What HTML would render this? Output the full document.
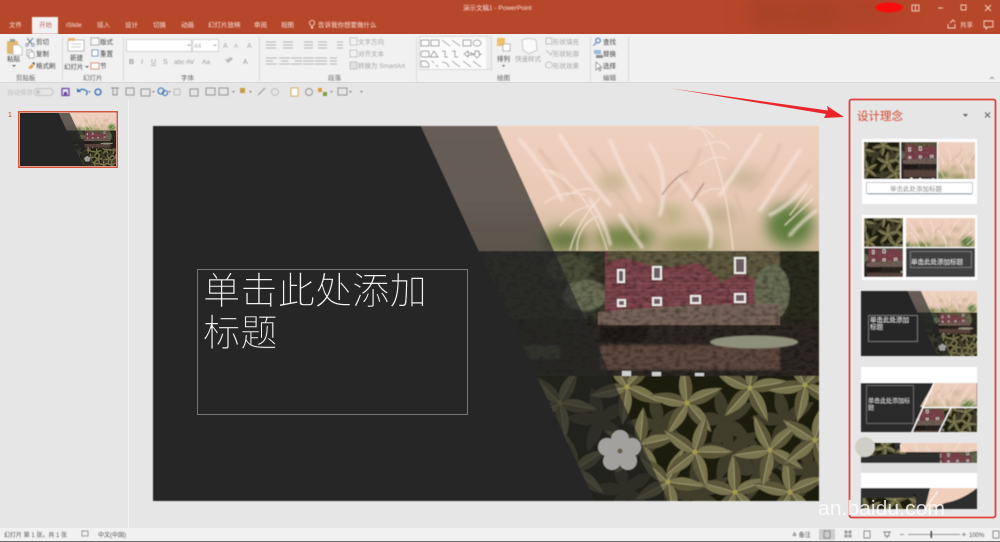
<!DOCTYPE html>
<html lang="zh-CN"><head><meta charset="utf-8"><title>演示文稿1 - PowerPoint</title>
<style>
html,body{margin:0;padding:0;width:1000px;height:542px;overflow:hidden;background:#e6e6e6}
svg{display:block}
text{font-family:"Liberation Sans","Noto Sans CJK SC",sans-serif}
.t{font-size:6.5px;fill:#444}
.g{font-size:6.5px;fill:#a5a5a5}
.w{font-size:6.5px;fill:#f6e3dc}
.k{font-size:6.5px;fill:#666}
</style></head><body>
<svg width="1000" height="542" viewBox="0 0 1000 542" xmlns="http://www.w3.org/2000/svg">
<defs>
<filter id="b3" x="-5%" y="-5%" width="110%" height="110%"><feGaussianBlur stdDeviation=".4"/></filter>
<filter id="b5" x="-5%" y="-5%" width="110%" height="110%"><feGaussianBlur stdDeviation=".6"/></filter>
<filter id="b1" x="-10%" y="-10%" width="120%" height="120%"><feGaussianBlur stdDeviation="1.4"/></filter>
<filter id="b6" x="-50%" y="-50%" width="200%" height="200%"><feGaussianBlur stdDeviation="7"/></filter>
<filter id="b9" x="-30%" y="-30%" width="160%" height="160%"><feGaussianBlur stdDeviation="12"/></filter>
<filter id="nk" x="0" y="0" width="100%" height="100%"><feTurbulence type="fractalNoise" baseFrequency=".16 .3" numOctaves="2" seed="4"/><feColorMatrix values="0 0 0 0 0 0 0 0 0 0 0 0 0 0 0 2.4 0 0 0 -1"/><feGaussianBlur stdDeviation=".5"/></filter>
<linearGradient id="pk" x1="0" y1="0" x2="0" y2="1"><stop offset="0" stop-color="#efd0bf"/><stop offset=".6" stop-color="#e8c9b5"/><stop offset="1" stop-color="#cdb799"/></linearGradient>
<clipPath id="c1"><rect x="421" y="126" width="398" height="125"/></clipPath>
<clipPath id="c2"><rect x="470" y="251" width="349" height="125"/></clipPath>
<clipPath id="c3"><rect x="530" y="376" width="289" height="125"/></clipPath>

<g id="pG">
 <g clip-path="url(#c1)">
 <rect x="421" y="126" width="398" height="125" fill="url(#pk)"/>
 <g filter="url(#b6)">
  <ellipse cx="790" cy="225" rx="24" ry="22" fill="#5f7d3c"/>
  <ellipse cx="625" cy="238" rx="30" ry="12" fill="#6f8242"/>
  <ellipse cx="565" cy="240" rx="22" ry="12" fill="#66773d"/>
  <ellipse cx="690" cy="245" rx="30" ry="7" fill="#8d9257"/>
  <ellipse cx="612" cy="182" rx="12" ry="7" fill="#b5aa7e"/>
  <ellipse cx="670" cy="215" rx="14" ry="9" fill="#b5ad80"/>
  <ellipse cx="745" cy="178" rx="18" ry="8" fill="#c7b296"/>
  <ellipse cx="720" cy="215" rx="16" ry="8" fill="#bcaa88"/>
 </g>
 <g fill="none" stroke="#d9b9a3" stroke-width="3.500" stroke-linecap="round" opacity=".55" filter="url(#b1)">
  <path d="M540 150q20 25 34 50M590 150q20 25 30 48M640 175q16 20 28 44M700 150q-8 25-30 45M780 145q-10 25-30 45M810 170q-14 18-30 30M620 195q14 18 18 40M735 195q10 20 12 40"/>
 </g>
 <g fill="none" stroke="#f8e6db" stroke-width="3.500" stroke-linecap="round" opacity=".75" filter="url(#b1)">
  <path d="M520 140q26 30 42 60M560 135q24 40 50 70M610 140q12 30 30 60M650 145q20 30 10 70M760 135q-20 30-40 60M800 150q-20 30-40 60M620 215q10 15 22 32M700 205q15 20 10 42M770 215q20-10 36-30M790 235q12-14 26-24M680 180q20 25 30 50M590 200q14 20 20 44"/>
 </g>
 <g fill="none" stroke="#f6e4d6" stroke-width="1.300" stroke-linecap="round" opacity=".9" filter="url(#b3)">
  <path d="M607 250Q590 190 550 172M570 250q8-30 30-52M567 195q20-10 28-4M543 170q14 0 24 10M545 203q18-14 40-8M560 226q15-20 34-20M577 250q0-24 20-34"/>
  <path d="M733 250Q725 170 703 130M690 128q16-2 24 10M705 145q18-8 24 4M700 165q16-12 26-6M700 195q10-8 20-6"/>
  <path d="M785 225q15-14 28-26M790 215q12-16 22-30"/>
 </g>
 <path d="M662 195q12-18 26-24M692 201q8-12 12-18" stroke="#8a6a68" stroke-width="1.200" fill="none" opacity=".7" filter="url(#b3)"/>
 </g>
</g>

<g id="pH">
 <g clip-path="url(#c2)">
 <rect x="470" y="251" width="349" height="125" fill="#2a2820"/>
 <rect x="470" y="251" width="135" height="68" fill="#34362a"/>
 <rect x="775" y="251" width="44" height="68" fill="#2c2d20"/>
 <ellipse cx="585" cy="295" rx="22" ry="16" fill="#6a6e54" filter="url(#b1)"/>
 <ellipse cx="570" cy="268" rx="24" ry="14" fill="#4a4e38" filter="url(#b1)"/>
 <rect x="605" y="252" width="174" height="60" fill="#7d444b"/>
 <g stroke="#9c6a72" stroke-width=".8" opacity=".55"><path d="M606 283H770M606 290H770M606 297H770M606 304H770M606 276H770"/></g>
 <path d="M608 251H780V268L760 283 742 272 722 282 700 263 660 268 625 258 608 262Z" fill="#5d6140" opacity=".85" filter="url(#b3)"/>
 <ellipse cx="772" cy="292" rx="18" ry="28" fill="#6a6e55" filter="url(#b3)"/>
 <path d="M598 312q80-8 182-8v22H598Z" fill="#77645a"/>
 <rect x="510" y="325" width="309" height="51" fill="#2e2722"/>
 <path d="M600 327H648L644 342H600Z" fill="#231c18" filter="url(#b3)"/>
 <path d="M600 345H780V370H600Z" fill="#5e493f" filter="url(#b1)"/>
 <path d="M520 345h40v14h-40z" fill="#4c4f38" filter="url(#b1)"/>
 <rect x="470" y="251" width="349" height="125" filter="url(#nk)" opacity=".38"/>
 <g fill="#e8e8e4">
  <rect x="617" y="269" width="8" height="14"/><rect x="652" y="266" width="10" height="14"/><rect x="734" y="257" width="12" height="17"/>
  <rect x="617" y="299" width="9" height="8"/><rect x="652" y="297" width="10" height="9"/><rect x="690" y="295" width="11" height="9"/><rect x="734" y="293" width="12" height="10"/>
 </g>
 <g fill="#6b5c60">
  <rect x="619" y="271" width="4" height="10"/><rect x="654" y="268" width="6" height="10"/><rect x="736" y="259" width="8" height="13"/>
  <rect x="619" y="301" width="5" height="4"/><rect x="654" y="299" width="6" height="5"/><rect x="692" y="297" width="7" height="5"/><rect x="736" y="295" width="8" height="6"/>
 </g>
 <ellipse cx="754" cy="342" rx="44" ry="6.500" fill="#8f907b" filter="url(#b3)"/>
 <rect x="622" y="371" width="9" height="5" fill="#cfcfcf"/><rect x="652" y="372" width="9" height="4" fill="#cfcfcf"/>
 <rect x="695" y="373" width="9" height="3" fill="#cfcfcf"/>
 </g>
</g>

<g id="lf"><path d="M0 0Q12-13 38 0Q12 13 0 0Z" fill="#79744f"/><path d="M0 0Q18 2 38 0Q12 13 0 0Z" fill="#5c5739"/><path d="M2 0H34" stroke="#a09a75" stroke-width=".7" fill="none"/></g>
<g id="ld"><path d="M0 0Q12-13 34 0Q12 13 0 0Z" fill="#413c29"/></g>
<g id="cl"><use href="#lf" transform="rotate(10)"/><use href="#lf" transform="rotate(82)"/><use href="#lf" transform="rotate(152)"/><use href="#lf" transform="rotate(225)"/><use href="#lf" transform="rotate(297)"/><circle r="2.500" fill="#a39c50"/></g>
<g id="cd"><use href="#ld" transform="rotate(40)"/><use href="#ld" transform="rotate(112)"/><use href="#ld" transform="rotate(184)"/><use href="#ld" transform="rotate(256)"/><use href="#ld" transform="rotate(328)"/></g>

<g id="pL">
 <g clip-path="url(#c3)">
 <rect x="530" y="376" width="289" height="125" fill="#1f1b11"/>
 <use href="#cd" transform="translate(600 420)"/><use href="#cd" transform="translate(660 425)"/><use href="#cd" transform="translate(725 420)"/><use href="#cd" transform="translate(785 420)"/><use href="#cd" transform="translate(625 490)"/><use href="#cd" transform="translate(700 495)"/><use href="#cd" transform="translate(760 470)"/><use href="#cd" transform="translate(810 470)"/><use href="#cd" transform="translate(730 450)"/>
 <use href="#cl" transform="translate(560 403)"/>
 <use href="#cl" transform="translate(575 470) rotate(30)"/>
 <use href="#cl" transform="translate(627 387) rotate(15)"/>
 <use href="#cl" transform="translate(640 445) rotate(50)"/>
 <use href="#cl" transform="translate(687 403) rotate(40)"/>
 <use href="#cl" transform="translate(750 388) rotate(-20)"/>
 <use href="#cl" transform="translate(805 385) rotate(20)"/>
 <use href="#cl" transform="translate(668 482) rotate(70)"/>
 <use href="#cl" transform="translate(735 492) rotate(-30)"/>
 <use href="#cl" transform="translate(790 492) rotate(40)"/>
 <use href="#cl" transform="translate(695 452) rotate(-10)"/>
 <use href="#cl" transform="translate(770 450) rotate(20)"/>
 <use href="#cl" transform="translate(815 440) rotate(60)"/>
 </g>
</g>

<g id="slide">
 <rect x="153" y="126" width="666" height="375" fill="#262626"/>
 <use href="#pG"/><use href="#pH"/><use href="#pL"/>
 <path d="M421 126H497L668 501H595Z" fill="#262626" opacity=".68"/>
 <path d="M153 126H421L595 501H153Z" fill="#262626"/>
 <g fill="#a3a19e"><circle cx="620" cy="439" r="9"/><circle cx="632" cy="447" r="9"/><circle cx="628" cy="461" r="9"/><circle cx="612" cy="461" r="9"/><circle cx="607" cy="447" r="9"/><circle cx="620" cy="451" r="10"/></g>
 <circle cx="620" cy="451" r="2.500" fill="#6b5c48"/>
</g>
</defs>

<!-- backgrounds -->
<rect width="1000" height="542" fill="#e6e6e6"/>
<rect width="1000" height="34" fill="#b7472a"/>
<g filter="url(#b9)" opacity=".55"><ellipse cx="770" cy="14" rx="24" ry="12" fill="#8f3a22"/><ellipse cx="818" cy="14" rx="24" ry="14" fill="#8f3a22"/><ellipse cx="870" cy="14" rx="30" ry="16" fill="#a54026"/></g>
<rect x="0" y="34" width="1000" height="48" fill="#f1f1f1"/>
<rect x="0" y="82" width="1000" height="1" fill="#d6d6d6"/>
<rect x="128" y="100" width="1" height="428" fill="#f2f2f2"/>
<rect x="0" y="528" width="1000" height="13" fill="#f1f1f1"/>
<rect x="0" y="541" width="1000" height="1" fill="#6a6a6a"/>

<!-- title bar & tabs -->
<g filter="url(#b3)">
<rect x="32" y="17" width="26" height="17" fill="#f1f1f1"/>
<text x="463" y="10" class="w">演示文稿1  -  PowerPoint</text>
<text x="9" y="27" class="w">文件</text>
<text x="39" y="27" class="t" style="fill:#c0492f">开始</text>
<text x="66" y="27" class="w">iSlide</text>
<text x="97" y="27" class="w">插入</text>
<text x="125" y="27" class="w">设计</text>
<text x="153" y="27" class="w">切换</text>
<text x="181" y="27" class="w">动画</text>
<text x="208" y="27" class="w">幻灯片放映</text>
<text x="254" y="27" class="w">审阅</text>
<text x="281" y="27" class="w">视图</text>
<circle cx="312" cy="23" r="2.600" fill="none" stroke="#f6e3dc" stroke-width=".8"/><path d="M311 26.500h2v2h-2z" fill="#f6e3dc"/>
<text x="318" y="27" class="w">告诉我你想要做什么</text>
<ellipse cx="889" cy="7.500" rx="14" ry="5" fill="#f80d0d"/>
<g fill="none" stroke="#f3d8cf" stroke-width=".9">
<rect x="912" y="5" width="7" height="6"/><path d="M915.500 5v6"/>
<path d="M938 8h5"/>
<rect x="961" y="5" width="5" height="5"/>
<path d="M985 5l6 6M991 5l-6 6"/>
<path d="M948 24v4h7v-4M950 23l3-3 2 2"/>
<path d="M984 21h9v6h-5l-2 2v-2h-2z"/>
</g>
<text x="960" y="27" class="w">共享</text>

<!-- ribbon group separators -->
<g fill="#d9d9d9">
<rect x="62" y="37" width="1" height="44"/><rect x="123" y="37" width="1" height="44"/><rect x="259" y="37" width="1" height="44"/><rect x="416" y="37" width="1" height="44"/><rect x="590" y="37" width="1" height="44"/><rect x="628" y="37" width="1" height="44"/>
</g>
<!-- clipboard -->
<rect x="7" y="41" width="11" height="13" rx="1" fill="#e4b86c"/><rect x="10" y="39" width="5" height="3" fill="#9b9b9b"/><path d="M13 45h6l3 3v7h-9z" fill="#fff" stroke="#9a9a9a" stroke-width=".6"/>
<text x="7" y="61" class="t">粘贴</text><path d="M12 65h4l-2 2z" fill="#666"/>
<path d="M27 38l5 6M33 38l-5 6" stroke="#6d7f96" stroke-width="1" fill="none"/><circle cx="27" cy="45" r="1.300" fill="none" stroke="#6d7f96" stroke-width=".7"/><circle cx="33" cy="45" r="1.300" fill="none" stroke="#6d7f96" stroke-width=".7"/>
<rect x="27" y="50" width="5" height="6" fill="#fff" stroke="#8a8a8a" stroke-width=".7"/><rect x="29" y="52" width="5" height="6" fill="#fff" stroke="#8a8a8a" stroke-width=".7"/>
<path d="M28 68l4-4 2 2-3 3z" fill="#d9a441"/><path d="M32 63l2-1 1 2-1 1z" fill="#555"/>
<text x="36" y="44" class="t">剪切</text><text x="36" y="56" class="t">复制</text><text x="36" y="68" class="t">格式刷</text>
<text x="16" y="80" class="k">剪贴板</text>
<!-- slides -->
<rect x="68" y="40" width="16" height="11" fill="#fff" stroke="#9a9a9a" stroke-width=".7"/><rect x="68" y="38" width="7" height="3" fill="#e4b86c"/><path d="M71 44h10M71 47h10" stroke="#bbb" stroke-width=".8"/>
<text x="70" y="60" class="t">新建</text><text x="64" y="69" class="t">幻灯片</text><path d="M85 66h4l-2 2z" fill="#666"/>
<rect x="91" y="38" width="8" height="7" fill="#f8f8f8" stroke="#8a8a8a" stroke-width=".7"/><path d="M92 50h6v6h-6z" fill="#fff" stroke="#4a78b8" stroke-width=".8"/><path d="M91 63h8v6h-8z" fill="#fff" stroke="#c96a3c" stroke-width=".8"/>
<text x="100" y="44" class="t">版式</text><text x="100" y="56" class="t">重置</text><text x="100" y="68" class="t">节</text>
<text x="83" y="80" class="k">幻灯片</text>
<!-- font -->
<rect x="126.500" y="39.500" width="65" height="12" fill="#fff" stroke="#d0d0d0"/><rect x="192.500" y="39.500" width="26" height="12" fill="#fff" stroke="#d0d0d0"/>
<text x="194" y="48" class="g">44</text><path d="M187 44.500h4l-2 2zM213 44.500h4l-2 2z" fill="#aaa"/>
<text x="223" y="48" font-size="7" fill="#aaa">A</text><text x="234" y="48" font-size="6" fill="#aaa">A</text><text x="247" y="48" font-size="7" fill="#aaa">A</text>
<text x="129" y="64" font-size="7" font-weight="bold" fill="#9a9a9a">B</text><text x="141" y="64" font-size="7" font-style="italic" fill="#9a9a9a">I</text><text x="151" y="64" font-size="7" text-decoration="underline" fill="#9a9a9a">U</text><text x="163" y="64" font-size="7" fill="#9a9a9a">S</text><text x="174" y="64" font-size="6.500" fill="#9a9a9a">abc</text><text x="186" y="64" font-size="6.500" fill="#9a9a9a">AV</text><text x="202" y="64" font-size="6.500" fill="#9a9a9a">Aa</text><path d="M225 60l6-3 2 2-5 4z" fill="#bbb"/><text x="243" y="64" font-size="7" fill="#9a9a9a">A</text>
<text x="181" y="80" class="k">字体</text>
<!-- paragraph -->
<g fill="none" stroke="#b5b5b5" stroke-width=".9">
<path d="M266 42h10M266 45h10M266 48h10M283 42h10M283 45h10M283 48h10M304 42h9M304 45h9M304 48h9M318 42h9M318 45h9M318 48h9M337 42h6M337 45h6M337 48h6"/>
<path d="M266 58h11M266 61h7M266 64h11M279 58h11M281 61h7M279 64h11M291 58h11M295 61h7M291 64h11M303 58h11M303 61h11M303 64h11M315 58h12M315 61h12M315 64h12M330 58h7M330 61h7M330 64h7"/>
</g>
<rect x="350" y="38" width="7" height="7" fill="none" stroke="#b5b5b5" stroke-width=".7"/><rect x="350" y="50" width="7" height="7" fill="none" stroke="#b5b5b5" stroke-width=".7"/><rect x="350" y="62" width="7" height="7" fill="#e0e0e0" stroke="#b5b5b5" stroke-width=".7"/>
<text x="358" y="44" class="g">文字方向</text><text x="358" y="56" class="g">对齐文本</text><text x="358" y="68" class="g">转换为 SmartArt</text>
<text x="328" y="80" class="k">段落</text>
<!-- shapes -->
<rect x="419.500" y="36.500" width="72" height="33" fill="#fbfbfb" stroke="#d8d8d8"/><rect x="486" y="37" width="5" height="32" fill="#ececec"/>
<g fill="none" stroke="#707070" stroke-width=".7">
<rect x="421" y="40" width="8" height="6"/><rect x="431" y="40" width="8" height="6"/><path d="M442 40l8 6M452 40l8 6"/><rect x="463" y="40" width="8" height="6"/><ellipse cx="477" cy="43" rx="4" ry="3"/>
<rect x="421" y="51" width="8" height="6" rx="1.500"/><path d="M434 51l4 6h-8zM442 51h3v6h3M452 51h3v6h3M464 54l4-3v2h4v2h-4v2zM475 51h4v3h2l-4 4-4-4h2z"/>
<path d="M421 67v-6h5l3 3v3zM432 61l2 2M436 65l2 2M442 62q5 0 7 5M452 61l8 6M463 61l8 6M473 61l8 6"/>
</g>
<!-- arrange -->
<rect x="497" y="38" width="8" height="8" fill="#f0c06a"/><rect x="503" y="44" width="7" height="7" fill="#fff" stroke="#888" stroke-width=".6"/>
<text x="497" y="61" class="t">排列</text><path d="M502 65h3l-1.500 2z" fill="#666"/>
<path d="M522 40q8-3 14 0l1 10-8 4-6-4z" fill="#fafafa" stroke="#bdbdbd" stroke-width=".8"/><text x="515" y="61" class="g">快速样式</text>
<g fill="none" stroke="#b5b5b5" stroke-width=".8"><rect x="546" y="38" width="6" height="6"/><path d="M546 50l5 5 2-5"/><ellipse cx="549" cy="65" rx="3.500" ry="3"/></g>
<text x="553" y="44" class="g">形状填充</text><text x="553" y="56" class="g">形状轮廓</text><text x="553" y="68" class="g">形状效果</text>
<text x="497" y="80" class="k">绘图</text>
<!-- edit -->
<circle cx="598" cy="40.500" r="2.300" fill="none" stroke="#3d6fb5" stroke-width="1"/><path d="M596 43l-2.500 2.500" stroke="#3d6fb5" stroke-width="1"/>
<path d="M594 50h7v4h-7z" fill="#9db8d8"/><path d="M596 55h7v3h-7z" fill="#8a8a8a"/>
<path d="M596 62v8l2-2 2 3 1-1-2-2.500h3z" fill="#fff" stroke="#777" stroke-width=".7"/>
<text x="603" y="44" class="t">查找</text><text x="603" y="56" class="t">替换</text><text x="603" y="68" class="t">选择</text>
<text x="603" y="80" class="k">编辑</text>
<path d="M990 79l2-2 2 2" fill="none" stroke="#777" stroke-width=".7"/>
<!-- QAT -->
<text x="7" y="94.500" class="g" style="fill:#bdbdbd">自动保存</text>
<rect x="34" y="88.500" width="19" height="7" rx="3.500" fill="none" stroke="#c4c4c4"/><circle cx="38" cy="92" r="2" fill="#c4c4c4"/>
<rect x="62" y="88.500" width="7" height="7" fill="none" stroke="#6a3fa0" stroke-width="1.200"/><rect x="64" y="92" width="3" height="3" fill="#6a3fa0"/>
<path d="M78 92q3-4 7-2t1 5" fill="none" stroke="#2f6cb5" stroke-width="1.200"/><path d="M77 88v4h4z" fill="#2f6cb5"/>
<circle cx="98" cy="92" r="3" fill="none" stroke="#2f6cb5" stroke-width="1.300"/>
<g fill="none" stroke="#8c8c8c" stroke-width=".9">
<path d="M111 88h8M113 88v7h4v-7"/><rect x="126" y="88" width="8" height="7"/><rect x="141" y="89" width="9" height="7"/>
<rect x="174" y="89" width="6" height="6" stroke="#bbb"/><rect x="190" y="89" width="8" height="7"/><rect x="206" y="88" width="9" height="7"/><rect x="219" y="88" width="9" height="7"/>
<circle cx="275" cy="92" r="3.500" stroke="#bbb"/><circle cx="309" cy="92" r="3.500"/><rect x="338" y="88" width="9" height="7"/>
</g>
<circle cx="161" cy="91" r="3" fill="none" stroke="#2f6cb5"/><circle cx="165" cy="93" r="2.500" fill="none" stroke="#2f6cb5"/>
<path d="M240 88h5v5h-5z" fill="#c99a3f"/><path d="M258 95l7-7" stroke="#aaa" stroke-width="1.500"/>
<rect x="291" y="88" width="7" height="8" fill="#fff" stroke="#d8a63a"/>
<rect x="318" y="88" width="4" height="4" fill="#d89a3a"/><rect x="323" y="92" width="4" height="4" fill="#7aa03a"/>
<path d="M152 91h3l-1.500 2zM168 91h3l-1.500 2zM88 91h3l-1.500 2zM232 91h3l-1.500 2zM249 91h3l-1.500 2zM330 91h3l-1.500 2zM349 91h3l-1.500 2zM360 91h3l-1.500 2z" fill="#8a8a8a"/>
</g>

<!-- slide pane thumbnail -->
<text x="8" y="117" font-size="7" fill="#c0492f">1</text>
<rect x="18" y="111" width="100" height="57" fill="#d3563c"/><rect x="19.500" y="112.500" width="97" height="54" fill="#e9e0dc"/>
<svg x="20" y="113" width="96" height="53" viewBox="153 126 666 375" preserveAspectRatio="none" filter="url(#b5)"><use href="#slide"/></svg>

<!-- main slide -->
<g filter="url(#b3)"><use href="#slide"/></g>
<rect x="197.500" y="269.500" width="270" height="145" fill="none" stroke="#8c8c8c" stroke-width=".8"/>
<g font-size="37.300" font-weight="300" fill="#f4f4f4" stroke="#262626" stroke-width=".55">
<text x="203" y="304">单击此处添加</text>
<text x="203" y="346">标题</text>
</g>

<!-- design panel -->
<rect x="849.500" y="99.500" width="146" height="418" rx="2" fill="#e6e6e6"/>
<g filter="url(#b3)">
<text x="857" y="120" font-size="11.500" fill="#d0492f">设计理念</text>
<path d="M963 114h5l-2.500 3z" fill="#666"/>
<path d="M985 112.500l5 5M990 112.500l-5 5" stroke="#666" stroke-width="1.100"/>

<!-- card 1 -->
<rect x="862" y="139" width="115" height="65" fill="#fff"/>
<svg x="864" y="142" width="36" height="37" viewBox="560 376 125 125" preserveAspectRatio="xMidYMid slice"><use href="#pL"/></svg>
<svg x="901" y="142" width="36" height="37" viewBox="590 251 125 125" preserveAspectRatio="xMidYMid slice"><use href="#pH"/></svg>
<svg x="938" y="142" width="37" height="37" viewBox="620 126 125 125" preserveAspectRatio="xMidYMid slice"><use href="#pG"/></svg>
<rect x="866.500" y="182.500" width="106" height="11" fill="#fff" stroke="#b7b7c0" stroke-width=".8"/><path d="M868 194h104" stroke="#8ea0b5" stroke-width="1"/>
<text x="890" y="191" font-size="6.500" fill="#777">单击此处添加标题</text>

<!-- card 2 -->
<rect x="862" y="215" width="115" height="65" fill="#fff"/>
<svg x="864" y="218" width="39" height="29" viewBox="560 390 130 97" preserveAspectRatio="xMidYMid slice"><use href="#pL"/></svg>
<svg x="864" y="248" width="39" height="29" viewBox="590 262 130 97" preserveAspectRatio="xMidYMid slice"><use href="#pH"/></svg>
<svg x="906" y="218" width="69" height="29" viewBox="560 135 259 109" preserveAspectRatio="xMidYMid slice"><use href="#pG"/></svg>
<rect x="906" y="248" width="69" height="29" fill="#3f3f3f"/>
<rect x="910.500" y="251.500" width="61" height="16" fill="none" stroke="#8c8c8c" stroke-width=".7"/>
<text x="911" y="264" font-size="6.500" fill="#e6e6e6">单击此处添加标题</text>

<!-- card 3 -->
<svg x="861" y="291" width="116" height="65" viewBox="153 126 666 375" preserveAspectRatio="none"><use href="#slide"/></svg>
<rect x="868.500" y="315.500" width="49" height="26" fill="none" stroke="#8c8c8c" stroke-width=".7"/>
<text x="870" y="322" font-size="6.500" fill="#e0e0e0">单击此处添加</text><text x="870" y="329" font-size="6.500" fill="#e0e0e0">标题</text>

<!-- card 4 -->
<rect x="861" y="367" width="116" height="16" fill="#fff"/>
<rect x="861" y="383" width="116" height="49" fill="#2a2a2a"/>
<svg x="920" y="383" width="57" height="24" viewBox="620 130 200 110" preserveAspectRatio="xMidYMid slice"><use href="#pG"/></svg>
<path d="M913 383H934L920 407H913Z" fill="#2a2a2a"/>
<svg x="912" y="408" width="32" height="24" viewBox="600 255 120 100" preserveAspectRatio="xMidYMid slice"><use href="#pH"/></svg>
<path d="M912 408H922L911 432H912Z" fill="#2a2a2a"/>
<svg x="944" y="408" width="33" height="24" viewBox="600 385 130 100" preserveAspectRatio="xMidYMid slice"><use href="#pL"/></svg>
<path d="M934 383L912 432M951 408L939 432M922 407.500H977" stroke="#fff" stroke-width="1.300" fill="none"/>
<rect x="866.500" y="385.500" width="47" height="38" fill="none" stroke="#7e7e7e" stroke-width=".7"/>
<text x="868" y="403" font-size="6" fill="#dcdcdc">单击此处添加标</text><text x="868" y="410" font-size="6" fill="#dcdcdc">题</text>

<!-- card 5 -->
<rect x="861" y="443" width="116" height="20" fill="#2a2a2a"/>
<svg x="861" y="443" width="45" height="20" viewBox="560 376 125 55" preserveAspectRatio="xMidYMid slice"><use href="#pL"/></svg>
<svg x="900" y="443" width="77" height="9" viewBox="560 135 259 30" preserveAspectRatio="xMidYMid slice"><use href="#pG"/></svg>
<path d="M861 463V458q15-4 34-4V443h6l-6 11H930q20 0 47-3V463Z" fill="#2d2d2d"/>
<svg x="940" y="452" width="37" height="11" viewBox="620 260 160 48" preserveAspectRatio="xMidYMid slice"><use href="#pH"/></svg>
<circle cx="865" cy="447" r="10" fill="#cfcfc8"/>
<rect x="861" y="463" width="116" height="10" fill="#dedede"/>
<rect x="861" y="473" width="116" height="15" fill="#fff"/>
<rect x="861" y="488" width="116" height="21" fill="#2d2d2d"/>
<svg x="861" y="494" width="55" height="15" viewBox="560 431 130 36" preserveAspectRatio="xMidYMid slice"><use href="#pL"/></svg>
<rect x="861" y="488" width="52" height="10" fill="#2d2d2d"/>
<path d="M930 488H977Q962 500 945 503L932 509H925Z" fill="#f0cfbd"/>
<path d="M925 509L938 491" stroke="#fff" stroke-width="1"/>
</g>
<rect x="849.500" y="99.500" width="146" height="418" rx="2" fill="none" stroke="#e2403a" stroke-width="1.800"/>

<!-- arrow -->
<path d="M672 88.500L828 110.500 827 106 844 117 824 118 826 114Z" fill="#e8262a"/>

<!-- status bar -->
<g filter="url(#b3)">
<text x="4" y="537" font-size="6" fill="#555">幻灯片 第 1 张，共 1 张</text>
<rect x="82" y="531" width="6" height="5" fill="none" stroke="#777" stroke-width=".7"/>
<text x="98" y="537" font-size="6" fill="#555">中文(中国)</text>
<text x="792" y="537" font-size="6" fill="#555">≜ 备注</text>
<rect x="819" y="529" width="16" height="11" fill="#cdcdcd"/>
<g fill="none" stroke="#666" stroke-width=".7">
<rect x="824" y="531" width="6" height="7"/>
<path d="M845 531h2v2h-2zM849 531h2v2h-2zM845 535h2v2h-2zM849 535h2v2h-2z"/>
<rect x="864" y="531" width="6" height="7"/>
<path d="M883 532h8M885 532v4h4v-4M887 536v2"/>
<rect x="993" y="531" width="6" height="7"/>
</g>
<path d="M900 534.500h4M908 534.500h52M962 534.500h4M964 532.500v4" stroke="#777" stroke-width=".7"/>
<rect x="930.500" y="531" width="1.500" height="7" fill="#444"/>
<text x="969" y="537" font-size="6" fill="#555">100%</text>
</g>

<!-- watermark -->
<text x="818" y="515" font-size="20" fill="#ffffff" fill-opacity=".8" textLength="127" lengthAdjust="spacingAndGlyphs">an.baidu.com</text>
</svg>
</body></html>
